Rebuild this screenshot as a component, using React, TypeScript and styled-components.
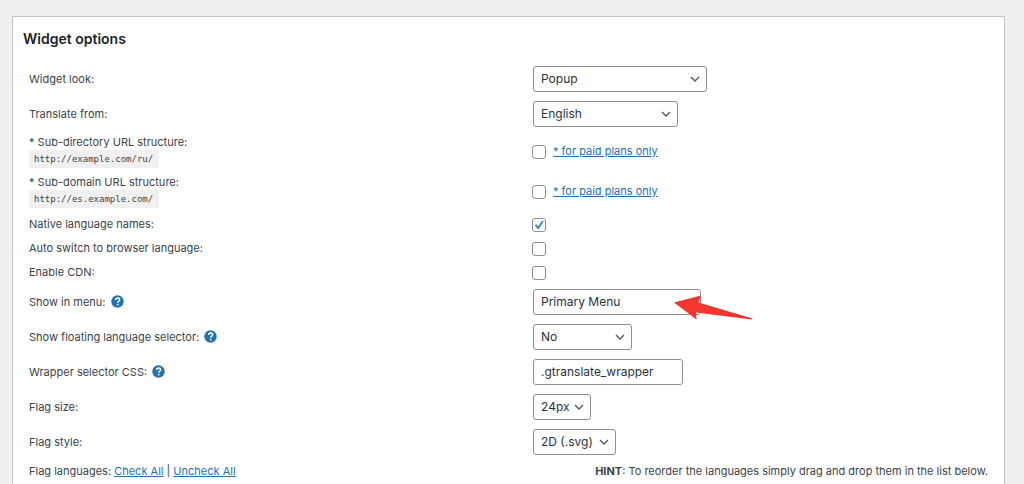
import React from 'react';
import styled, { createGlobalStyle } from 'styled-components';

const GlobalStyle = createGlobalStyle`
  *, *::before, *::after { box-sizing: border-box; }
  body {
    margin: 0;
    background: #efefef;
    color: #3c434a;
    font: 11px/16px Inter, "Liberation Sans", sans-serif;
  }
`;

const Page = styled.main`
  display: flex;
  flex-direction: column;
  min-height: 100vh;
  padding: 16px 19px 0 12px;
`;

const Panel = styled.section`
  flex: 1;
  background: #fff;
  border: 1px solid #c3c4c7;
  border-bottom: 0;
`;

const Title = styled.h2`
  margin: 0;
  padding: 12px 10px;
  color: #1d2327;
  font-size: 14px;
  font-weight: 600;
  line-height: 20px;
`;

const Options = styled.form`
  padding: 0 16px;
`;

const Group = styled.div`
  padding-bottom: ${(p: { $spaced?: boolean }) => (p.$spaced ? '1px' : '0')};
`;

const rowHeights = { field: '35px', url: '40px', toggle: '24px' };

const Row = styled.div<{ $kind: keyof typeof rowHeights }>`
  display: grid;
  grid-template-columns: 503fr 456fr;
  align-items: center;
  min-height: ${(p) => rowHeights[p.$kind]};
`;

const LabelCell = styled.div`
  display: flex;
  align-items: center;
  gap: 5px;
`;

const UrlLabel = styled.label`
  display: flex;
  flex-direction: column;
  align-items: flex-start;
`;

const Code = styled.code`
  padding: 0 6px 0 5px;
  background: #f0f0f1;
  font: 9px/18px "DejaVu Sans Mono", monospace;
`;

const ControlCell = styled.div`
  display: flex;
  align-items: center;
  gap: 7px;
`;

const Link = styled.a`
  color: #2271b1;
  text-decoration: underline;
`;

const SelectWrap = styled.span<{ $width: number }>`
  position: relative;
  width: ${(p) => p.$width}px;
  margin-left: 1px;
`;

const Select = styled.select`
  appearance: none;
  display: block;
  width: 100%;
  height: 26px;
  margin: 0;
  padding: 0 20px 0 7px;
  border: 1px solid #8c8f94;
  border-radius: 3px;
  background: #fff;
  color: #2c3338;
  font: 12px/24px Inter, "Liberation Sans", sans-serif;
`;

const Chevron = styled.svg`
  position: absolute;
  top: 9px;
  right: 7px;
  width: 10px;
  height: 8px;
  pointer-events: none;
`;

const TextInput = styled.input`
  width: 150px;
  height: 26px;
  margin: 0 0 0 1px;
  padding: 0 7px;
  border: 1px solid #8c8f94;
  border-radius: 3px;
  background: #fff;
  color: #2c3338;
  font: 12px/24px Inter, "Liberation Sans", sans-serif;
`;

const CheckWrap = styled.span`
  position: relative;
  display: flex;
  margin-top: 1px;
`;

const Checkbox = styled.input`
  appearance: none;
  width: 14px;
  height: 14px;
  margin: 0;
  border: 1px solid #8c8f94;
  border-radius: 3px;
  background: #fff;

  & + svg { display: none; }
  &:checked + svg { display: block; }
`;

const Tick = styled.svg`
  position: absolute;
  inset: 0;
  width: 14px;
  height: 14px;
  pointer-events: none;
`;

const HelpButton = styled.button`
  display: flex;
  padding: 0;
  border: 0;
  background: none;
`;

const Pointer = styled.svg`
  position: absolute;
  top: 6px;
  left: 141px;
  width: 80px;
  height: 26px;
  pointer-events: none;
`;

const LanguagesRow = styled.div`
  display: flex;
  align-items: center;
  justify-content: space-between;
  min-height: 24px;
`;

function Help({ label }: { label: string }) {
  return (
    <HelpButton type="button" aria-label={label}>
      <svg width="13" height="13" viewBox="0 0 13 13">
        <circle cx="6.5" cy="6.5" r="6.2" fill="#2271b1" />
        <path d="M4.6 5C4.6 3.7 5.4 3.1 6.6 3.1S8.6 3.8 8.6 4.8C8.6 6.1 6.8 6.1 6.8 7.7" fill="none" stroke="#fff" strokeWidth="1.5" />
        <circle cx="6.7" cy="9.6" r=".95" fill="#fff" />
      </svg>
    </HelpButton>
  );
}

interface DropdownProps {
  id: string;
  value: string;
  width: number;
  children?: React.ReactNode;
}

function Dropdown({ id, value, width, children }: DropdownProps) {
  return (
    <SelectWrap $width={width}>
      <Select id={id} defaultValue={value}>
        <option>{value}</option>
      </Select>
      <Chevron viewBox="0 0 10 8" aria-hidden="true">
        <path d="M1 2l4 4 4-4" fill="none" stroke="#50575e" strokeWidth="1.4" />
      </Chevron>
      {children}
    </SelectWrap>
  );
}

function Check({ id, checked = false }: { id: string; checked?: boolean }) {
  return (
    <CheckWrap>
      <Checkbox id={id} type="checkbox" defaultChecked={checked} />
      <Tick viewBox="0 0 14 14" aria-hidden="true">
        <path d="M2.8 7.2L4.3 6.2 6.1 8.5 10 2.8 11.6 3.5 6.7 11.1H5.7Z" fill="#3582c4" />
      </Tick>
    </CheckWrap>
  );
}

interface FieldProps {
  id: string;
  label: string;
  help?: boolean;
  kind?: 'field' | 'toggle';
  children: React.ReactNode;
}

function Field({ id, label, help, kind = 'field', children }: FieldProps) {
  return (
    <Row $kind={kind}>
      <LabelCell>
        <label htmlFor={id}>{label}</label>
        {help && <Help label={`Help: ${label}`} />}
      </LabelCell>
      <ControlCell>{children}</ControlCell>
    </Row>
  );
}

function UrlField({ id, label, example }: { id: string; label: string; example: string }) {
  return (
    <Row $kind="url">
      <UrlLabel htmlFor={id}>
        {label}
        <Code>{example}</Code>
      </UrlLabel>
      <ControlCell>
        <Check id={id} />
        <Link href="#plans">* for paid plans only</Link>
      </ControlCell>
    </Row>
  );
}

export default function App() {
  return (
    <>
      <GlobalStyle />
      <Page>
        <Panel>
          <Title>Widget options</Title>
          <Options>
            <Group>
              <Field id="look" label="Widget look:"><Dropdown id="look" value="Popup" width={174} /></Field>
              <Field id="from" label="Translate from:"><Dropdown id="from" value="English" width={145} /></Field>
            </Group>
            <Group $spaced>
              <UrlField id="subdir" label="* Sub-directory URL structure:" example="http://example.com/ru/" />
              <UrlField id="subdomain" label="* Sub-domain URL structure:" example="http://es.example.com/" />
            </Group>
            <Group>
              <Field kind="toggle" id="native" label="Native language names:"><Check id="native" checked /></Field>
              <Field kind="toggle" id="auto" label="Auto switch to browser language:"><Check id="auto" /></Field>
              <Field kind="toggle" id="cdn" label="Enable CDN:"><Check id="cdn" /></Field>
            </Group>
            <Group>
              <Field id="menu" label="Show in menu:" help>
                <Dropdown id="menu" value="Primary Menu" width={168}>
                  <Pointer viewBox="0 0 80 26" aria-hidden="true">
                    <path d="M0 7.5L27 0.5 24.5 7.5 78.5 23.5 77.5 24.5 22 17.5 22.5 24.5Z" fill="#f7352f" />
                  </Pointer>
                </Dropdown>
              </Field>
              <Field id="floating" label="Show floating language selector:" help><Dropdown id="floating" value="No" width={99} /></Field>
              <Field id="wrapper" label="Wrapper selector CSS:" help><TextInput id="wrapper" defaultValue=".gtranslate_wrapper" /></Field>
              <Field id="size" label="Flag size:"><Dropdown id="size" value="24px" width={58} /></Field>
              <Field id="style" label="Flag style:"><Dropdown id="style" value="2D (.svg)" width={83} /></Field>
            </Group>
            <LanguagesRow>
              <span>
                Flag languages: <Link href="#check-all">Check All</Link> | <Link href="#uncheck-all">Uncheck All</Link>
              </span>
              <span><b>HINT</b>: To reorder the languages simply drag and drop them in the list below.</span>
            </LanguagesRow>
          </Options>
        </Panel>
      </Page>
    </>
  );
}
